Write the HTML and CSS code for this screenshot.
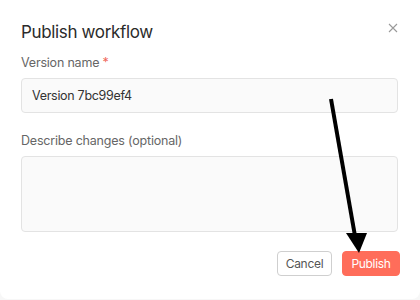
FILE: index.html
```html
<!DOCTYPE html>
<html lang="en">
<head>
    <meta charset="UTF-8">
    <meta name="viewport" content="width=device-width, initial-scale=1.0">
    <title>Publish workflow</title>
    <link rel="stylesheet" href="styles.css">
</head>
<body>
    <div class="dialog">
        <!-- Header -->
        <div class="dialog-header">
            <h1>Publish workflow</h1>
            <button class="close" aria-label="Close">
                <svg width="10" height="10" viewBox="0 0 10 10">
                    <path d="M1 1L9 9M9 1L1 9" stroke="#9a9a9a" stroke-width="1.1" fill="none"/>
                </svg>
            </button>
        </div>

        <!-- Fields -->
        <label class="field-label">Version name <span class="required">*</span></label>
        <input class="input" type="text" value="Version 7bc99ef4">

        <label class="field-label second">Describe changes (optional)</label>
        <textarea class="textarea"></textarea>

        <!-- Footer -->
        <div class="dialog-footer">
            <button class="btn btn-secondary">Cancel</button>
            <button class="btn btn-primary">Publish</button>
        </div>

        <!-- Annotation arrow -->
        <svg class="arrow" width="420" height="300" viewBox="0 0 420 300">
            <line x1="331" y1="99" x2="355" y2="236" stroke="#000" stroke-width="4"/>
            <polygon points="346,233 367,233 359,253" fill="#000"/>
        </svg>
    </div>
</body>
</html>
```

FILE: styles.css
```css
body {
    margin: 0;
    font-family: Inter, "Noto Sans", sans-serif;
    background: #f7f7f7;
    width: 420px;
    height: 300px;
    overflow: hidden;
}

.dialog {
    position: relative;
    box-sizing: border-box;
    width: 420px;
    height: 299px;
    background: #fff;
    border-radius: 0 0 8px 8px;
    padding: 21px 21px 0 21px;
    display: flex;
    flex-direction: column;
}

.dialog-header {
    display: flex;
    justify-content: space-between;
    align-items: flex-start;
    height: 34px;
}

.dialog-header h1 {
    margin: 0;
    font-size: 17px;
    letter-spacing: -0.35px;
    font-weight: 400;
    color: #2b2b2b;
    line-height: 22px;
}

.close {
    background: none;
    border: none;
    padding: 0;
    margin: 2px 1px 0 0;
    width: 10px;
    height: 10px;
    display: flex;
    cursor: pointer;
}

.field-label {
    font-size: 12.5px;
    letter-spacing: -0.2px;
    color: #666;
    line-height: 16px;
    margin-bottom: 7px;
}

.field-label.second {
    margin-top: 20px;
    margin-bottom: 7px;
}

.required {
    color: #f0675a;
}

.input,
.textarea {
    box-sizing: border-box;
    width: 377px;
    background: #fafafa;
    border: 1px solid #e3e3e3;
    border-radius: 4px;
    font-family: inherit;
    font-size: 12.5px;
    letter-spacing: -0.3px;
    color: #333;
    outline: none;
}

.input {
    height: 35px;
    padding: 0 10px;
}

.textarea {
    height: 76px;
    resize: none;
}

.dialog-footer {
    display: flex;
    justify-content: flex-end;
    gap: 10px;
    margin-top: 19px;
    margin-right: -1px;
}

.btn {
    height: 25px;
    border-radius: 4px;
    font-family: inherit;
    font-size: 12px;
    letter-spacing: -0.3px;
    padding: 0;
    cursor: pointer;
}

.btn-secondary {
    background: #fff;
    border: 1px solid #cfcfcf;
    color: #555;
    width: 55px;
}

.btn-primary {
    background: #ff6d5a;
    border: 1px solid #ff6d5a;
    color: #fff;
    width: 58px;
}

.arrow {
    position: absolute;
    top: 0;
    left: 0;
    pointer-events: none;
}
```
